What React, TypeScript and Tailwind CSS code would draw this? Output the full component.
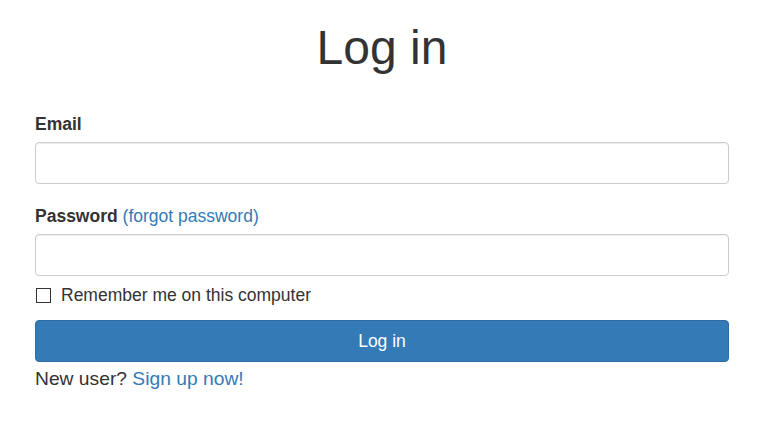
export default function App() {
  return (
    <div className="min-h-screen bg-white text-[#333] font-['Liberation_Sans',Arial,sans-serif]">
      <div className="ml-[35px] w-[694px]">
        <h1 className="pt-[20px] text-center text-[48px] leading-[56px] font-normal">Log in</h1>

        <form className="mt-[36px] text-[17.5px] leading-[24px]">
          <label className="block font-bold">Email</label>
          <input
            type="email"
            className="mt-[6px] block h-[42px] w-full rounded-[4px] border border-[#ccc] bg-white px-3 shadow-[inset_0_1px_1px_rgba(0,0,0,0.075)] outline-none"
          />

          <div className="mt-[20px]">
            <label className="font-bold">Password</label>{' '}
            <a href="#" className="text-[#337ab7]">(forgot password)</a>
          </div>
          <input
            type="password"
            className="mt-[6px] block h-[42px] w-full rounded-[4px] border border-[#ccc] bg-white px-3 shadow-[inset_0_1px_1px_rgba(0,0,0,0.075)] outline-none"
          />

          <label className="mt-[7px] flex items-center gap-[10px]">
            <span className="ml-px block h-[15px] w-[15px] border border-[#333] bg-white" />
            <span>Remember me on this computer</span>
          </label>

          <button
            type="button"
            className="mt-[13px] block h-[42px] w-full rounded-[4px] border border-[#2e6da4] bg-[#337ab7] text-white"
          >
            Log in
          </button>

          <p className="mt-[5px] text-[19.25px]">
            New user? <a href="#" className="text-[#337ab7]">Sign up now!</a>
          </p>
        </form>
      </div>
    </div>
  );
}
